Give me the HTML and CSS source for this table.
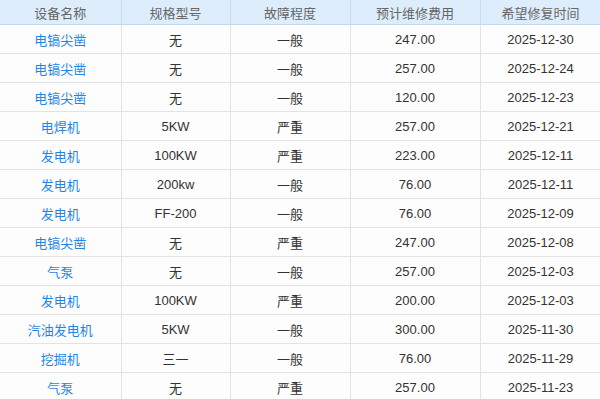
FILE: index.html
```html
<!DOCTYPE html>
<html lang="zh">
<head>
<meta charset="utf-8">
<link rel="stylesheet" href="styles.css">
</head>
<body>
<table class="grid">
  <colgroup>
    <col class="c1"><col class="c2"><col class="c3"><col class="c4"><col class="c5">
  </colgroup>
  <thead>
    <tr><th>设备名称</th><th>规格型号</th><th>故障程度</th><th>预计维修费用</th><th>希望修复时间</th></tr>
  </thead>
  <tbody>
    <tr><td class="name">电镐尖凿</td><td>无</td><td>一般</td><td>247.00</td><td>2025-12-30</td></tr>
    <tr><td class="name">电镐尖凿</td><td>无</td><td>一般</td><td>257.00</td><td>2025-12-24</td></tr>
    <tr><td class="name">电镐尖凿</td><td>无</td><td>一般</td><td>120.00</td><td>2025-12-23</td></tr>
    <tr><td class="name">电焊机</td><td>5KW</td><td>严重</td><td>257.00</td><td>2025-12-21</td></tr>
    <tr><td class="name">发电机</td><td>100KW</td><td>严重</td><td>223.00</td><td>2025-12-11</td></tr>
    <tr><td class="name">发电机</td><td>200kw</td><td>一般</td><td>76.00</td><td>2025-12-11</td></tr>
    <tr><td class="name">发电机</td><td>FF-200</td><td>一般</td><td>76.00</td><td>2025-12-09</td></tr>
    <tr><td class="name">电镐尖凿</td><td>无</td><td>严重</td><td>247.00</td><td>2025-12-08</td></tr>
    <tr><td class="name">气泵</td><td>无</td><td>一般</td><td>257.00</td><td>2025-12-03</td></tr>
    <tr><td class="name">发电机</td><td>100KW</td><td>严重</td><td>200.00</td><td>2025-12-03</td></tr>
    <tr><td class="name">汽油发电机</td><td>5KW</td><td>一般</td><td>300.00</td><td>2025-11-30</td></tr>
    <tr><td class="name">挖掘机</td><td>三一</td><td>一般</td><td>76.00</td><td>2025-11-29</td></tr>
    <tr><td class="name">气泵</td><td>无</td><td>严重</td><td>257.00</td><td>2025-11-23</td></tr>
  </tbody>
</table>
</body>
</html>
```
FILE: styles.css
```css
html, body {
  margin: 0;
  padding: 0;
  background: #fdfdfd;
}
body {
  font-family: "Liberation Sans", "Noto Sans CJK SC", sans-serif;
  font-size: 13px;
  color: #333;
  overflow: hidden;
}
.grid {
  border-collapse: collapse;
  table-layout: fixed;
  width: 601px;
}
.c1 { width: 121px; }
.c2 { width: 109px; }
.c3 { width: 120px; }
.c4 { width: 130px; }
.c5 { width: 121px; }
.grid th {
  height: 24px;
  padding: 0;
  background: #deedfb;
  color: #666;
  font-weight: normal;
  text-align: center;
  border-right: 1px solid #c9ddf1;
  border-bottom: 1px solid #c3d8ee;
}
.grid td {
  height: 28px;
  padding: 0;
  text-align: center;
  border-right: 1px solid #e3e3e3;
  border-bottom: 1px solid #e3e3e3;
  white-space: nowrap;
}
.grid td.name {
  color: #1f86e8;
}
```
